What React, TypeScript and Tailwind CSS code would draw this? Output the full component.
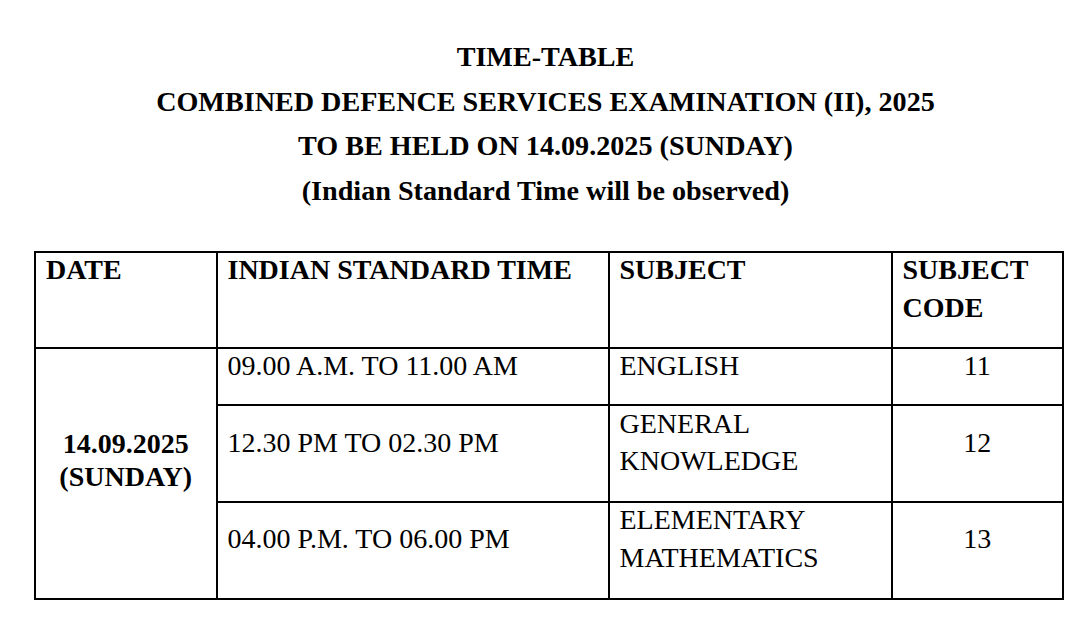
export default function App() {
  const cell = "border-black px-[10px]";
  return (
    <div className="min-h-screen bg-white text-black font-['Liberation_Serif','Times_New_Roman',serif] text-[28px]">
      <div className="pt-[35px] pl-[12px] text-center font-bold leading-[44.5px] text-[28.15px]">
        <p>TIME-TABLE</p>
        <p>COMBINED DEFENCE SERVICES EXAMINATION (II), 2025</p>
        <p>TO BE HELD ON 14.09.2025 (SUNDAY)</p>
        <p>(Indian Standard Time will be observed)</p>
      </div>

      <div className="ml-[34px] mt-[38px] w-[1030px] border-2 border-black grid grid-cols-[181.5px_392px_283px_169.5px] grid-rows-[96.4px_57px_97px_94.2px] leading-[37.5px]">
        {/* header */}
        <div className={`${cell} border-r-2 border-b-2 font-bold`}>
          <div className="-mt-[2px]">DATE</div>
        </div>
        <div className={`${cell} border-r-2 border-b-2 font-bold`}>
          <div className="-mt-[2px]">INDIAN STANDARD TIME</div>
        </div>
        <div className={`${cell} border-r-2 border-b-2 font-bold`}>
          <div className="-mt-[2px]">SUBJECT</div>
        </div>
        <div className={`${cell} border-b-2 font-bold`}>
          <div className="-mt-[2px]">
            SUBJECT
            <br />
            CODE
          </div>
        </div>

        {/* date spans all rows */}
        <div className={`${cell} row-span-3 border-r-2 flex items-center justify-center pb-[26px] font-bold text-center leading-[33px]`}>
          <div>
            14.09.2025
            <br />
            (SUNDAY)
          </div>
        </div>

        {/* row 1 */}
        <div className={`${cell} border-r-2 border-b-2 flex items-center pb-[23px]`}>09.00 A.M. TO 11.00 AM</div>
        <div className={`${cell} border-r-2 border-b-2 flex items-center pb-[23px]`}>ENGLISH</div>
        <div className={`${cell} border-b-2 flex items-center justify-center pb-[23px]`}>11</div>

        {/* row 2 */}
        <div className={`${cell} border-r-2 border-b-2 flex items-center pb-[23px]`}>12.30 PM TO 02.30 PM</div>
        <div className={`${cell} border-r-2 border-b-2 flex items-center pb-[23px]`}>
          <div>
            GENERAL
            <br />
            KNOWLEDGE
          </div>
        </div>
        <div className={`${cell} border-b-2 flex items-center justify-center pb-[23px]`}>12</div>

        {/* row 3 */}
        <div className={`${cell} border-r-2 flex items-center pb-[23px]`}>04.00 P.M. TO 06.00 PM</div>
        <div className={`${cell} border-r-2 flex items-center pb-[23px]`}>
          <div>
            ELEMENTARY
            <br />
            MATHEMATICS
          </div>
        </div>
        <div className={`${cell} flex items-center justify-center pb-[23px]`}>13</div>
      </div>
    </div>
  );
}
